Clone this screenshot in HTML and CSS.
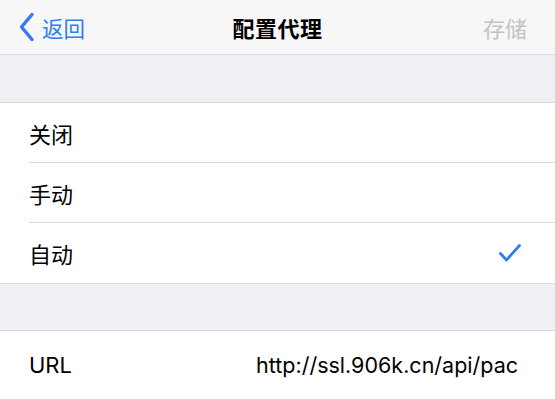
FILE: index.html
```html
<!DOCTYPE html>
<html lang="zh-CN">
<head>
  <meta charset="UTF-8" />
  <meta name="viewport" content="width=device-width, initial-scale=1.0" />
  <title>配置代理</title>
  <link rel="stylesheet" href="styles.css">
</head>
<body>
  <nav class="navbar">
    <a class="nav-back" href="#">
      <svg class="chevron" viewBox="0 0 17 30" width="17" height="30">
        <path d="M14 2.5 L3.5 15 L14 27.5" fill="none" stroke="currentColor" stroke-width="3.4" stroke-linecap="round" stroke-linejoin="round"/>
      </svg>
      <span>返回</span>
    </a>
    <div class="nav-title">配置代理</div>
    <a class="nav-save" href="#">存储</a>
  </nav>

  <div class="group-gap"></div>

  <ul class="group">
    <li class="row"><span class="label">关闭</span></li>
    <li class="row"><span class="label">手动</span></li>
    <li class="row selected">
      <span class="label">自动</span>
      <svg class="check" viewBox="0 0 24 20" width="24" height="20">
        <path d="M2.5 10.5 L8.5 17 L21.5 2.5" fill="none" stroke="currentColor" stroke-width="2.8" stroke-linecap="round" stroke-linejoin="round"/>
      </svg>
    </li>
  </ul>

  <div class="group-gap second"></div>

  <ul class="group">
    <li class="row url-row">
      <span class="label">URL</span>
      <span class="value">http://ssl.906k.cn/api/pac</span>
    </li>
  </ul>
</body>
</html>
```

FILE: styles.css
```css
:root {
  --nav-bg: #f7f7f8;
  --group-bg: #efeff4;
  --cell-bg: #ffffff;
  --sep: #d9d9dd;
  --text: #000000;
  --muted: #c3c3c7;
  --tint: #2f7cf6;
  --font: Inter, "Noto Sans CJK SC", sans-serif;
}
* { box-sizing: border-box; margin: 0; padding: 0; }
body {
  background: var(--group-bg);
  color: var(--text);
  font-family: var(--font);
  font-size: 22px;
  overflow: hidden;
}
a { text-decoration: none; }

/* top bar: back link, centred title, save action */
.navbar {
  height: 55px;
  background: var(--nav-bg);
  border-bottom: 1px solid var(--sep);
  display: grid;
  grid-template-columns: 1fr auto 1fr;
  align-items: center;
  padding: 0 28px;
}
.nav-back {
  display: flex;
  align-items: center;
  gap: 7px;
  margin-left: -10px;
  color: var(--tint);
  font-size: 21.5px;
}
.nav-back .chevron { display: block; }
.nav-title {
  font-weight: 700;
  letter-spacing: 0.5px;
}
.nav-save {
  justify-self: end;
  color: var(--muted);
}

.group-gap { height: 47px; }
.group-gap.second { height: 46px; }

/* grouped table cells */
.group {
  list-style: none;
  background: var(--cell-bg);
  border-top: 1px solid var(--sep);
  border-bottom: 1px solid var(--sep);
}
.row {
  height: 60px;
  display: flex;
  align-items: center;
  justify-content: space-between;
  margin-left: 29px;
  padding-right: 37px;
  border-bottom: 1px solid var(--sep);
}
.row:last-child { border-bottom: none; }
.url-row { height: 68px; }
.check { color: var(--tint); display: block; margin-right: -4px; }
.value { font-size: 21.5px; }
```
